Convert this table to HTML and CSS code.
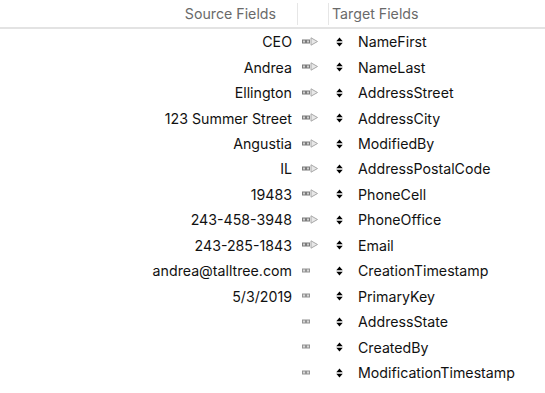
FILE: index.html
```html
<!DOCTYPE html>
<html>
<head>
<meta charset="utf-8">
<link rel="stylesheet" href="styles.css">
</head>
<body>
<div class="mapper">
  <div class="header">
    <div class="h-source">Source Fields</div>
    <div class="divider"></div>
    <div class="h-mid"></div>
    <div class="divider"></div>
    <div class="h-target">Target Fields</div>
  </div>
  <div class="rows" id="rows"></div>
</div>
<script>
(function(){
  var data = [
    ["CEO","NameFirst",1],
    ["Andrea","NameLast",1],
    ["Ellington","AddressStreet",1],
    ["123 Summer Street","AddressCity",1],
    ["Angustia","ModifiedBy",1],
    ["IL","AddressPostalCode",1],
    ["19483","PhoneCell",1],
    ["243-458-3948","PhoneOffice",1],
    ["243-285-1843","Email",1],
    ["andrea@talltree.com","CreationTimestamp",0],
    ["5/3/2019","PrimaryKey",0],
    ["","AddressState",0],
    ["","CreatedBy",0],
    ["","ModificationTimestamp",0]
  ];
  var on = '<svg class="conn" width="18" height="10" viewBox="0 0 18 10"><rect x="0.5" y="3" width="3" height="3" fill="#cfcfcf" stroke="#7c7c7c"/><rect x="4.5" y="3" width="3" height="3" fill="#cfcfcf" stroke="#7c7c7c"/><path d="M9 0.8 L15.5 4.5 L9 8.2 Z" fill="#e8e8e8" stroke="#a8a8a8" stroke-width="1"/></svg>';
  var off = '<svg class="conn" width="18" height="10" viewBox="0 0 18 10"><rect x="0.5" y="3" width="3" height="3" fill="#d8d8d8" stroke="#949494"/><rect x="4.5" y="3" width="3" height="3" fill="#d8d8d8" stroke="#949494"/></svg>';
  var updown = '<svg class="ud" width="7" height="10" viewBox="0 0 7 10"><path d="M0.3 4.2 L3.5 0.4 L6.7 4.2 Z" fill="#000"/><path d="M0.3 5.8 L3.5 9.6 L6.7 5.8 Z" fill="#000"/></svg>';
  var html = "";
  data.forEach(function(r){
    html += '<div class="row"><div class="src">'+r[0]+'</div><div class="c-conn">'+(r[2]?on:off)+'</div><div class="c-ud">'+updown+'</div><div class="tgt">'+r[1]+'</div></div>';
  });
  document.getElementById("rows").innerHTML = html;
})();
</script>
</body>
</html>
```
FILE: styles.css
```css
html, body {
  margin: 0;
  padding: 0;
  background: #ffffff;
}
body {
  font-family: Inter, "Liberation Sans", sans-serif;
  color: #111111;
  width: 545px;
  height: 393px;
  overflow: hidden;
}
.header {
  display: flex;
  align-items: center;
  height: 27px;
  border-bottom: 2px solid #e3e3e3;
  font-size: 14.2px;
  color: #6a6a6a;
}
.h-source {
  width: 276px;
  padding-right: 21px;
  text-align: right;
}
.divider {
  width: 1px;
  height: 22px;
  background: #e6e6e6;
}
.h-mid {
  width: 30px;
}
.h-target {
  padding-left: 3px;
}
.rows {
  display: flex;
  flex-direction: column;
}
.row {
  display: flex;
  align-items: center;
  height: 25.46px;
  font-size: 14.2px;
}
.src {
  width: 292px;
  text-align: right;
  white-space: nowrap;
}
.c-conn {
  width: 18px;
  margin-left: 10px;
  display: flex;
  align-items: center;
}
.c-ud {
  width: 7px;
  margin-left: 16px;
  display: flex;
  align-items: center;
}
.tgt {
  margin-left: 15px;
  white-space: nowrap;
}
.conn, .ud {
  display: block;
}
```
